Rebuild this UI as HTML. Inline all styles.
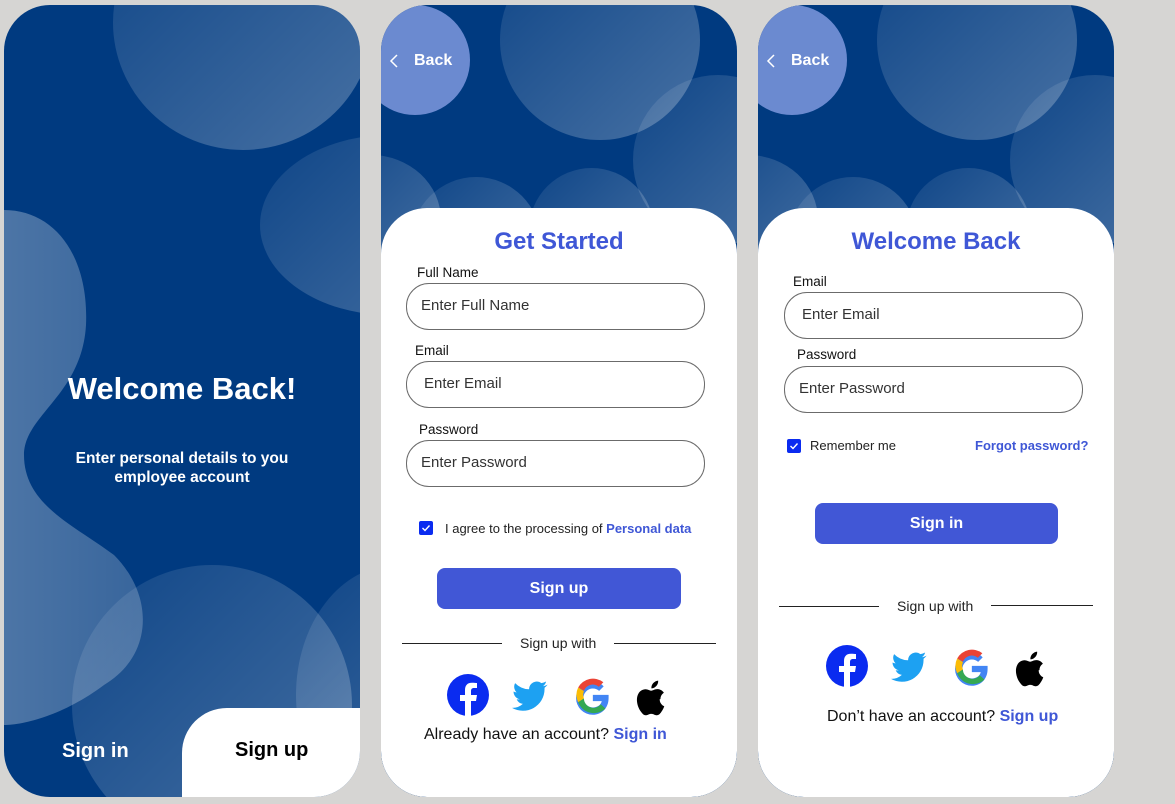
<!DOCTYPE html>
<html><head><meta charset="utf-8">
<style>
*{margin:0;padding:0;box-sizing:border-box}
html,body{overflow:hidden}
body{width:1175px;height:804px;background:#d6d5d3;position:relative;font-family:"Liberation Sans",sans-serif}
.p{position:absolute;top:5px;width:356px;height:792px;border-radius:46px;overflow:hidden;background:#003a80}
.c{position:absolute;border-radius:50%;background:linear-gradient(135deg,rgba(255,255,255,0.06),rgba(255,255,255,0.28))}
.a{position:absolute;white-space:nowrap}
.card{position:absolute;left:0;top:203px;width:356px;height:589px;background:#fff;border-radius:46px}
.t{color:#3f57d6;font-weight:bold;font-size:24px;width:356px;text-align:center}
.lb{font-size:13.5px;color:#111}
.in{position:absolute;left:25px;width:299px;height:47px;border:1px solid #6b6b6b;border-radius:23px;font-size:15px;color:#333;padding:13px 14px}
.btn{position:absolute;background:#4157d6;border-radius:8px;color:#fff;font-weight:bold;font-size:16px;text-align:center}
.cb{position:absolute;width:14px;height:14px;background:#0a2bf0;border-radius:2px}
.ln{position:absolute;height:1px;background:#222}
.back{position:absolute;left:-21px;top:0px;width:110px;height:110px;border-radius:50%;background:#6b8ad0}
</style></head><body>

<!-- Panel 1 -->
<div class="p" style="left:4px">
  <div class="c" style="left:109px;top:-110px;width:260px;height:255px"></div>
  <div class="c" style="left:256px;top:130px;width:260px;height:180px"></div>
  <svg class="a" style="left:0;top:200px" width="160" height="530">
    <defs><linearGradient id="lg" x1="0" y1="0" x2="1" y2="0"><stop offset="0" stop-color="#fff" stop-opacity="0.3"/><stop offset="1" stop-color="#fff" stop-opacity="0.22"/></linearGradient></defs>
    <path d="M0 5C50 5 85 50 82 120C78 190 20 210 20 250C20 300 70 320 110 350C150 390 150 450 100 480C60 510 20 520 0 520Z" fill="url(#lg)"/>
  </svg>
  <div class="c" style="left:68px;top:560px;width:280px;height:280px"></div>
  <div class="c" style="left:292px;top:560px;width:200px;height:260px"></div>
  <div class="a" style="left:0;width:356px;text-align:center;top:366px;color:#fff;font-weight:bold;font-size:31px">Welcome Back!</div>
  <div class="a" style="left:0;width:356px;text-align:center;top:444px;color:#fff;font-weight:bold;font-size:15.5px;line-height:19px">Enter personal details to you<br>employee account</div>
  <div class="a" style="left:58px;top:735px;color:#fff;font-weight:bold;font-size:20px">Sign in</div>
  <div style="position:absolute;left:178px;top:703px;width:200px;height:100px;background:#fff;border-radius:45px 0 0 0"></div>
  <div class="a" style="left:231px;top:734px;color:#000;font-weight:bold;font-size:20px">Sign up</div>
</div>

<!-- Panel 2 -->
<div class="p" style="left:381px">
  <div class="c" style="left:119px;top:-65px;width:200px;height:200px"></div>
  <div class="c" style="left:252px;top:70px;width:170px;height:170px"></div>
  <div class="c" style="left:30px;top:172px;width:130px;height:130px"></div>
  <div class="c" style="left:148px;top:163px;width:125px;height:125px"></div>
  <div class="c" style="left:-80px;top:150px;width:140px;height:130px"></div>
  <div class="back"></div>
  <svg class="a" style="left:7px;top:48px" width="12" height="16"><path d="M9 2L3 8l6 6" stroke="#fff" stroke-width="1.5" fill="none"/></svg>
  <div class="a" style="left:33px;top:47px;color:#fff;font-weight:bold;font-size:16px">Back</div>
  <div class="card">
    <div class="a t" style="left:0;top:20px">Get Started</div>
    <div class="a lb" style="left:36px;top:57px">Full Name</div>
    <div class="in" style="top:75px">Enter Full Name</div>
    <div class="a lb" style="left:34px;top:135px">Email</div>
    <div class="in" style="top:153px;padding-left:17px">Enter Email</div>
    <div class="a lb" style="left:38px;top:214px">Password</div>
    <div class="in" style="top:232px">Enter Password</div>
    <div class="cb" style="left:38px;top:313px"><svg width="14" height="14"><path d="M3.5 7l2.5 2.5 4.5-5" stroke="#fff" stroke-width="1.4" fill="none"/></svg></div>
    <div class="a" style="left:64px;top:313px;font-size:13px;color:#222">I agree to the processing of <b style="color:#3f57d6">Personal data</b></div>
    <div class="btn" style="left:56px;top:360px;width:244px;height:41px;line-height:41px">Sign up</div>
    <div class="ln" style="left:21px;top:435px;width:100px"></div>
    <div class="ln" style="left:233px;top:435px;width:102px"></div>
    <div class="a" style="left:139px;top:427px;font-size:14px;color:#222">Sign up with</div>
    <svg class="a" style="left:66px;top:464px" width="226" height="48" viewBox="0 0 226 48">
      <g transform="translate(0,2)"><circle cx="21" cy="21" r="21" fill="#0a2bf0"/><path d="M24 42V27h5l1-6h-6v-4c0-2 1-3 3-3h3V9c-1 0-3-.3-5-.3-5 0-7 3-7 7.5V21h-5v6h5v15z" fill="#fff"/></g>
      <path transform="translate(65,8) scale(1.55)" fill="#1da1f2" d="M23 3a10 10 0 01-3 1 5 5 0 002-3 10 10 0 01-3 1 5 5 0 00-8 4A13 13 0 012 2a5 5 0 001 6 5 5 0 01-2-.6 5 5 0 004 5 5 5 0 01-2 0 5 5 0 004 3A10 10 0 010 18a14 14 0 0021-12V5a10 10 0 002-2z" />
      <g transform="translate(128,5) scale(1.05)">
        <path d="M32 17H17v6h8.5c-1 4-4.5 6-8.5 6a9 9 0 010-18c2.3 0 4.3.8 6 2.2l4.3-4.3A15 15 0 0017 4a16 16 0 100 32c8 0 15-6 15-16z" fill="#4285f4"/>
        <path d="M3 10a16 16 0 0124-5l-4.3 4.3A9 9 0 008.5 13z" fill="#ea4335"/>
        <path d="M3 10l5.5 3.5a9 9 0 000 7L3 24a16 16 0 010-14z" fill="#fbbc05"/>
        <path d="M3 24l5.5-3.5A9 9 0 0024.5 26l4.5 4A16 16 0 013 24z" fill="#34a853"/>
      </g>
      <g transform="translate(187,3) scale(1.15)">
        <path d="M23 21c0-4 3-5.5 3-5.7-2-2.6-4.6-3-5.5-3-2.3-.2-4.5 1.4-5.6 1.4s-3-1.4-4.9-1.3C7.4 12.4 5 14 3.8 16.3 1.2 21 3.1 27.6 5.6 31.3c1.3 1.8 2.7 3.8 4.6 3.7 1.9 0 2.6-1.2 4.8-1.2s2.9 1.2 4.8 1.2c2 0 3.3-1.8 4.5-3.7 1.4-2 2-4 2-4.1-.1 0-3.9-1.5-4-6.1z" fill="#000"/>
        <path d="M19.5 9.5c1-1.2 1.7-2.9 1.5-4.6-1.5.1-3.2 1-4.3 2.2-.9 1.1-1.8 2.8-1.5 4.5 1.6.1 3.3-.9 4.3-2.1z" fill="#000"/>
      </g>
    </svg>
    <div class="a" style="left:43px;top:518px;font-size:16px;color:#111">Already have an account? <b style="color:#3f57d6">Sign in</b></div>
  </div>
</div>

<!-- Panel 3 -->
<div class="p" style="left:758px">
  <div class="c" style="left:119px;top:-65px;width:200px;height:200px"></div>
  <div class="c" style="left:252px;top:70px;width:170px;height:170px"></div>
  <div class="c" style="left:30px;top:172px;width:130px;height:130px"></div>
  <div class="c" style="left:148px;top:163px;width:125px;height:125px"></div>
  <div class="c" style="left:-80px;top:150px;width:140px;height:130px"></div>
  <div class="back"></div>
  <svg class="a" style="left:7px;top:48px" width="12" height="16"><path d="M9 2L3 8l6 6" stroke="#fff" stroke-width="1.5" fill="none"/></svg>
  <div class="a" style="left:33px;top:47px;color:#fff;font-weight:bold;font-size:16px">Back</div>
  <div class="card">
    <div class="a t" style="left:0;top:20px">Welcome Back</div>
    <div class="a lb" style="left:35px;top:66px">Email</div>
    <div class="in" style="top:84px;left:26px;padding-left:17px">Enter Email</div>
    <div class="a lb" style="left:39px;top:139px">Password</div>
    <div class="in" style="top:158px;left:26px">Enter Password</div>
    <div class="cb" style="left:29px;top:231px"><svg width="14" height="14"><path d="M3.5 7l2.5 2.5 4.5-5" stroke="#fff" stroke-width="1.4" fill="none"/></svg></div>
    <div class="a" style="left:52px;top:230px;font-size:13px;color:#222">Remember me</div>
    <div class="a" style="left:217px;top:230px;font-size:13px;color:#3f57d6;font-weight:bold">Forgot password?</div>
    <div class="btn" style="left:57px;top:295px;width:243px;height:41px;line-height:41px">Sign in</div>
    <div class="ln" style="left:21px;top:398px;width:100px"></div>
    <div class="ln" style="left:233px;top:397px;width:102px"></div>
    <div class="a" style="left:139px;top:390px;font-size:14px;color:#222">Sign up with</div>
    <svg class="a" style="left:68px;top:437px" width="226" height="48" viewBox="0 0 226 48">
      <g><circle cx="21" cy="21" r="21" fill="#0a2bf0"/><path d="M24 42V27h5l1-6h-6v-4c0-2 1-3 3-3h3V9c-1 0-3-.3-5-.3-5 0-7 3-7 7.5V21h-5v6h5v15z" fill="#fff"/></g>
      <path transform="translate(65,6) scale(1.55)" fill="#1da1f2" d="M23 3a10 10 0 01-3 1 5 5 0 002-3 10 10 0 01-3 1 5 5 0 00-8 4A13 13 0 012 2a5 5 0 001 6 5 5 0 01-2-.6 5 5 0 004 5 5 5 0 01-2 0 5 5 0 004 3A10 10 0 010 18a14 14 0 0021-12V5a10 10 0 002-2z" />
      <g transform="translate(128,3) scale(1.05)">
        <path d="M32 17H17v6h8.5c-1 4-4.5 6-8.5 6a9 9 0 010-18c2.3 0 4.3.8 6 2.2l4.3-4.3A15 15 0 0017 4a16 16 0 100 32c8 0 15-6 15-16z" fill="#4285f4"/>
        <path d="M3 10a16 16 0 0124-5l-4.3 4.3A9 9 0 008.5 13z" fill="#ea4335"/>
        <path d="M3 10l5.5 3.5a9 9 0 000 7L3 24a16 16 0 010-14z" fill="#fbbc05"/>
        <path d="M3 24l5.5-3.5A9 9 0 0024.5 26l4.5 4A16 16 0 013 24z" fill="#34a853"/>
      </g>
      <g transform="translate(187,1) scale(1.15)">
        <path d="M23 21c0-4 3-5.5 3-5.7-2-2.6-4.6-3-5.5-3-2.3-.2-4.5 1.4-5.6 1.4s-3-1.4-4.9-1.3C7.4 12.4 5 14 3.8 16.3 1.2 21 3.1 27.6 5.6 31.3c1.3 1.8 2.7 3.8 4.6 3.7 1.9 0 2.6-1.2 4.8-1.2s2.9 1.2 4.8 1.2c2 0 3.3-1.8 4.5-3.7 1.4-2 2-4 2-4.1-.1 0-3.9-1.5-4-6.1z" fill="#000"/>
        <path d="M19.5 9.5c1-1.2 1.7-2.9 1.5-4.6-1.5.1-3.2 1-4.3 2.2-.9 1.1-1.8 2.8-1.5 4.5 1.6.1 3.3-.9 4.3-2.1z" fill="#000"/>
      </g>
    </svg>
    <div class="a" style="left:69px;top:500px;font-size:16px;color:#111">Don’t have an account? <b style="color:#3f57d6">Sign up</b></div>
  </div>
</div>
</body></html>
